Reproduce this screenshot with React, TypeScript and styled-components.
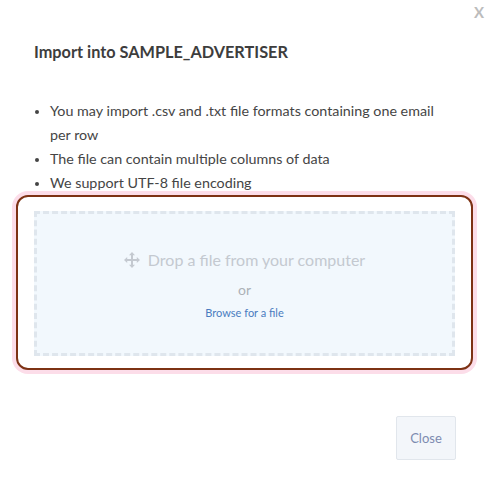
import * as React from 'react';
import styled, { createGlobalStyle } from 'styled-components';

const GlobalStyle = createGlobalStyle`
  html, body {
    margin: 0;
    padding: 0;
    background: #ffffff;
  }
  body {
    font-family: Lato, "Open Sans", sans-serif;
  }
`;

const Modal = styled.div`
  width: 492px;
  height: 482px;
  box-sizing: border-box;
  display: flex;
  flex-direction: column;
  background: #fff;
`;

const TopBar = styled.div`
  display: flex;
  justify-content: flex-end;
  padding: 3px 8px 0 0;
  height: 20px;
`;

const CloseX = styled.span`
  font-size: 15px;
  color: #bcbcbc;
  font-weight: 700;
  line-height: 18px;
`;

const Title = styled.h3`
  margin: 18px 0 0 34px;
  font-size: 16.3px;
  font-weight: 700;
  color: #3d3d3d;
  line-height: 22px;
`;

const Rules = styled.ul`
  margin: 36px 45px 0 0;
  padding-left: 50px;
  font-size: 14.3px;
  line-height: 24px;
  color: #454545;

  li::marker {
    font-size: 12px;
  }
`;

const DropFrame = styled.div`
  margin: 0 19px 0 16px;
  border: 2px solid #7d3214;
  border-radius: 12px;
  box-shadow: 0 0 0 4px #fcdde9;
  padding: 14px 16px 12px 16px;
  background: #fff;
`;

const DropArea = styled.div`
  height: 137px;
  border: 3px dashed #dfe6ed;
  background: #f2f8fd;
  display: flex;
  flex-direction: column;
  align-items: center;
  justify-content: center;
  padding-top: 2px;
`;

const DropText = styled.div`
  display: flex;
  align-items: center;
  gap: 8px;
  font-size: 16px;
  color: #c4c9d0;
  line-height: 22px;
`;

const OrText = styled.div`
  margin-top: 9px;
  font-size: 14px;
  color: #acb1b7;
  line-height: 20px;
`;

const BrowseLink = styled.a`
  margin-top: 5px;
  font-size: 11px;
  color: #4a7cc0;
  text-decoration: none;
  line-height: 16px;
  cursor: pointer;
`;

const Footer = styled.div`
  display: flex;
  justify-content: flex-end;
  padding: 46px 36px 0 0;
`;

const CloseButton = styled.button`
  width: 60px;
  height: 44px;
  border: 1px solid #e1e6ec;
  background: #f3f6fa;
  color: #7d8bb0;
  font-family: Lato, sans-serif;
  font-size: 13px;
  border-radius: 2px;
  cursor: pointer;
`;

const MoveIcon = () => (
  <svg width="16" height="16" viewBox="0 0 16 16" fill="#c4c9d0">
    <path d="M8 0 L11 3.2 H9 V7 H12.8 V5 L16 8 L12.8 11 V9 H9 V12.8 H11 L8 16 L5 12.8 H7 V9 H3.2 V11 L0 8 L3.2 5 V7 H7 V3.2 H5 Z" />
  </svg>
);

export default function App() {
  return (
    <Modal>
      <GlobalStyle />
      <TopBar>
        <CloseX>X</CloseX>
      </TopBar>
      <Title>Import into SAMPLE_ADVERTISER</Title>
      <Rules>
        <li>You may import .csv and .txt file formats containing one email per row</li>
        <li>The file can contain multiple columns of data</li>
        <li>We support UTF-8 file encoding</li>
      </Rules>
      <DropFrame>
        <DropArea>
          <DropText>
            <MoveIcon />
            Drop a file from your computer
          </DropText>
          <OrText>or</OrText>
          <BrowseLink>Browse for a file</BrowseLink>
        </DropArea>
      </DropFrame>
      <Footer>
        <CloseButton>Close</CloseButton>
      </Footer>
    </Modal>
  );
}
